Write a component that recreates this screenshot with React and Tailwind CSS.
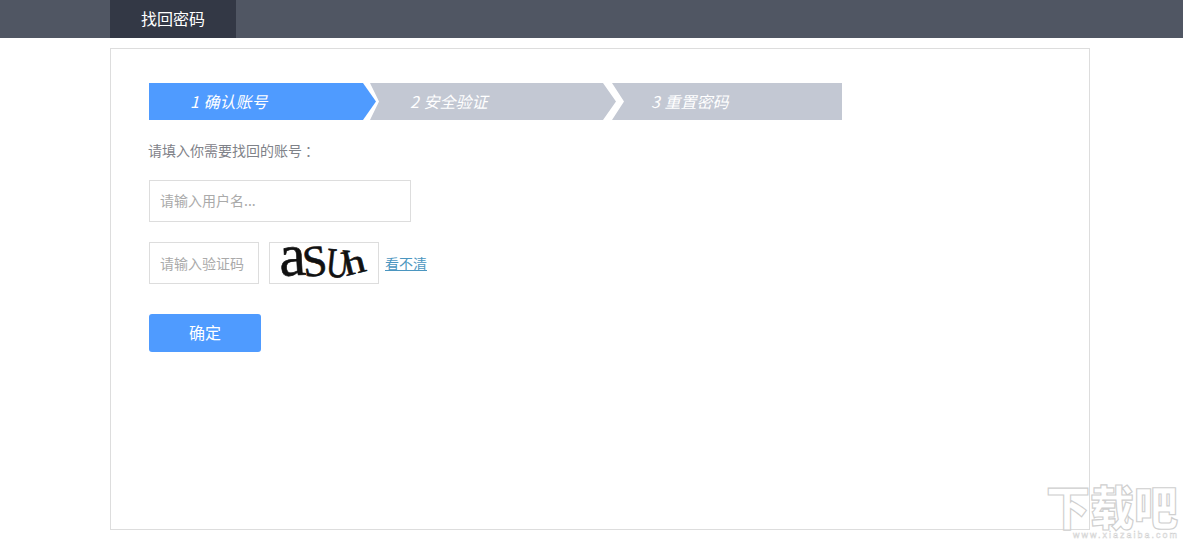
const font = { fontFamily: '"Noto Sans CJK SC", "Liberation Sans", sans-serif' };

function Step({ children, className }) {
  return (
    <div className={`flex h-[37px] shrink-0 items-center pb-[2px] text-base italic text-white [word-spacing:1px] ${className}`}>
      {children}
    </div>
  );
}

function Captcha() {
  return (
    <div className="h-[42px] w-[110px] shrink-0 border border-[#dddddd] bg-white">
      <svg width="108" height="40" viewBox="0 0 108 40">
        <g fill="#111" stroke="#111" strokeWidth="0.6" fontFamily="'Liberation Serif', serif">
          <text transform="translate(10 33) rotate(-3)" fontSize="60">a</text>
          <text transform="translate(34 34) rotate(-6)" fontSize="44">S</text>
          <text transform="translate(55 33) rotate(6) scale(0.75 1)" fontSize="42">U</text>
          <text transform="translate(76 33) rotate(-14) scale(1.3 1)" fontSize="34">h</text>
        </g>
      </svg>
    </div>
  );
}

export default function App() {
  return (
    <div style={font} className="relative h-[541px] w-[1183px] overflow-hidden bg-white">
      <header className="h-[38px] bg-[#505663] pl-[110px]">
        <div className="flex h-full w-[126px] items-center justify-center bg-[#333845] pb-[3px] text-base text-white">
          找回密码
        </div>
      </header>

      <main className="ml-[110px] mt-[10px] h-[482px] w-[980px] border border-[#dddddd] pl-[38px] pt-[34px]">
        <div className="flex">
          <Step className="w-[227px] bg-[#4f9bff] pl-[41px] [clip-path:polygon(0_0,214px_0,227px_50%,214px_100%,0_100%)]">
            1 确认账号
          </Step>
          <Step className="-ml-[6px] w-[247px] bg-[#c3c8d3] pl-[40px] [clip-path:polygon(0_0,233px_0,246px_50%,233px_100%,0_100%,9px_50%)]">
            2 安全验证
          </Step>
          <Step className="-ml-[5px] w-[230px] bg-[#c3c8d3] pl-[39px] [clip-path:polygon(0_0,100%_0,100%_100%,0_100%,12px_50%)]">
            3 重置密码
          </Step>
        </div>

        <p className="-ml-px mt-[20px] text-sm leading-[20px] text-[#7f8289]">
          请填入你需要找回的账号<span className="pl-[3px]">：</span>
        </p>

        <input
          readOnly
          placeholder="请输入用户名..."
          className="mt-[20px] block h-[42px] w-[262px] border border-[#dddddd] bg-white pb-[2px] pl-[10px] pr-[10px] text-sm outline-none placeholder:text-[#aaaaaa]"
        />

        <div className="mt-[20px] flex items-center">
          <input
            readOnly
            placeholder="请输入验证码"
            className="h-[42px] w-[110px] border border-[#dddddd] bg-white pl-[10px] text-sm outline-none placeholder:text-[#aaaaaa]"
          />
          <div className="ml-[10px]">
            <Captcha />
          </div>
          <a className="ml-[6px] text-sm text-[#4b96c0] underline">看不清</a>
        </div>

        <button className="mt-[30px] block h-[38px] w-[112px] rounded-[3px] bg-[#4f9bff] pb-[2px] text-base text-white">
          确定
        </button>
      </main>

      <svg className="absolute right-0 bottom-0" width="140" height="60" viewBox="0 0 140 60">
        <text x="3" y="44" fontSize="47" fontWeight="900" fill="#ffffff" stroke="#cfcfcf" strokeWidth="1.2" textLength="132" lengthAdjust="spacingAndGlyphs">下载吧</text>
        <text x="30" y="57" fontSize="9" fill="#ffffff" stroke="#cccccc" strokeWidth="0.4" textLength="104" fontFamily="'Liberation Sans', sans-serif">www.xiazaiba.com</text>
      </svg>
    </div>
  );
}
